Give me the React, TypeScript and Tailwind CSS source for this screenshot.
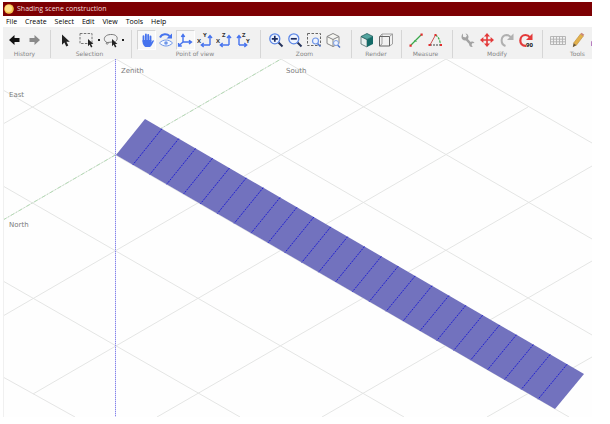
import type { ReactNode } from "react";

const menus = ["File", "Create", "Select", "Edit", "View", "Tools", "Help"];

const BLUE = "#4673ee";

function Icon({ children }: { children: ReactNode }) {
  return (
    <svg viewBox="0 0 16 16" className="h-4 w-4 shrink-0" fill="none" aria-hidden="true">
      {children}
    </svg>
  );
}

const Cursor = ({ x = 0, y = 0, s = 1 }: { x?: number; y?: number; s?: number }) => (
  <path transform={`translate(${x} ${y}) scale(${s})`} d="M0 0v10.2l2.4-2.2 1.9 4 2-1-1.9-3.8h3.4z" fill="#222" />
);

const Arrow = ({ color }: { color: string }) => (
  <path d="M3 8l5.500-5v3h5v4h-5v3z" fill={color} />
);

const Glass = ({ plus }: { plus?: boolean }) => (
  <Icon>
    <path d="M10.5 10.5l4 4" stroke="#26345c" strokeWidth="2" />
    <circle cx="6.8" cy="6.8" r="5" fill="#eef4ff" stroke="#5b86e6" strokeWidth="1.3" />
    <path d={plus ? "M3.8 6.8h6M6.8 3.8v6" : "M3.8 6.8h6"} stroke="#1c2c60" strokeWidth="1.7" />
  </Icon>
);

function Axes({ horizontal, vertical, flip }: { horizontal: string; vertical: string; flip?: boolean }) {
  return (
    <Icon>
      <path
        d={flip ? "M4 13V4M2 6l2-2.400L6 6M4 13h7M9.300 11l2.400 2-2.400 2" : "M13 13V4M11 6l2-2.400L15 6M13 13H5M6.700 11l-2.400 2 2.400 2"}
        stroke={BLUE}
        strokeWidth="1.4"
      />
      <text x={flip ? 11 : 0} y={flip ? 11 : 11} fontSize="6" fontWeight="700" fill="#333">{horizontal}</text>
      <text x={flip ? 7 : 6} y="5" fontSize="6" fontWeight="700" fill="#333">{vertical}</text>
    </Icon>
  );
}

type Tool = { name: string; icon: ReactNode; active?: boolean; drop?: boolean };
type Group = { label: string; width: string; tools: Tool[] };

const groups: Group[] = [
  {
    label: "History",
    width: "w-[48px] pl-[1px] pr-[5px]",
    tools: [
      { name: "Undo", icon: <Icon><Arrow color="#111" /></Icon> },
      { name: "Redo", icon: <Icon><g transform="translate(16 0) scale(-1 1)"><Arrow color="#8a8a8a" /></g></Icon> },
    ],
  },
  {
    label: "Selection",
    width: "w-[81px] pl-[2px] pr-[5px]",
    tools: [
      { name: "Select", icon: <Icon><Cursor x={5} y={2.5} /></Icon> },
      {
        name: "Rectangle selection",
        drop: true,
        icon: (
          <Icon>
            <rect x="1" y="1.5" width="12" height="10" stroke="#777" strokeDasharray="2.5 1.3" />
            <Cursor x={9} y={7} s={0.7} />
          </Icon>
        ),
      },
      {
        name: "Lasso selection",
        drop: true,
        icon: (
          <Icon>
            <path d="M4 10.5C0 9 0 3 7.500 2.500s8 5 5 7M4 10.500c-1 0-1 2 .3 1.700s1-2 0-1.700L9 10" stroke="#777" />
            <Cursor x={9} y={7} s={0.7} />
          </Icon>
        ),
      },
    ],
  },
  {
    label: "Point of view",
    width: "w-[129px] pl-[5px] pr-[7px]",
    tools: [
      {
        name: "Pan",
        active: true,
        icon: (
          <Icon>
            <path d="M4.500 9.500V4.200M6.900 8V2.500M9.200 8V2.800M11.500 9V4.500" stroke={BLUE} strokeWidth="1.800" strokeLinecap="round" />
            <path d="M3.600 8h8.800v2.500l1-1.800c.7-1 1.800-.5 1.400.6l-2.300 4.200c-.5.900-1.200 1.500-2.200 1.500H7.200c-1 0-1.600-.4-2.200-1.200C4 12.500 3.600 11.500 3.600 10z" fill={BLUE} />
          </Icon>
        ),
      },
      {
        name: "Orbit",
        icon: (
          <Icon>
            <path d="M2 5.500C4 1.500 9 1.500 11.500 4" stroke={BLUE} strokeWidth="2" />
            <path d="M14 1.500v5H8.500z" fill={BLUE} />
            <path d="M1.500 11c3.500-4 9.500-4 13 0-3.500 4-9.500 4-13 0z" fill="#f5f9ff" stroke="#6f96e8" />
            <circle cx="8" cy="11" r="1.800" fill="#6f96e8" />
          </Icon>
        ),
      },
      {
        name: "Perspective",
        active: true,
        icon: (
          <Icon>
            <path d="M6 10V3M6 10h8M6 10l-4 3.500M4.300 4.800L6 2.500l1.700 2.300M12 8.200l2.500 1.900-2.500 1.900M1.600 11v3h3.200" stroke={BLUE} strokeWidth="1.400" />
          </Icon>
        ),
      },
      { name: "Top view", icon: <Axes horizontal="X" vertical="Y" /> },
      { name: "Front view", icon: <Axes horizontal="X" vertical="Z" /> },
      { name: "Side view", icon: <Axes horizontal="Y" vertical="Z" flip /> },
    ],
  },
  {
    label: "Zoom",
    width: "w-[91px] pl-[5px] pr-[8px]",
    tools: [
      { name: "Zoom in", icon: <Glass plus /> },
      { name: "Zoom out", icon: <Glass /> },
      {
        name: "Zoom window",
        icon: (
          <Icon>
            <rect x="1.500" y="1.500" width="13" height="12" stroke="#666" strokeDasharray="2.500 1.500" />
            <path d="M11.500 11.500l3 3" stroke="#4a72c8" strokeWidth="1.600" />
            <circle cx="9.500" cy="9" r="3" fill="#eef4ff" stroke="#6f96e8" strokeWidth="1.200" />
          </Icon>
        ),
      },
      {
        name: "Zoom object",
        icon: (
          <Icon>
            <path d="M2 4.500L8 1.500l6 3v7l-6 3-6-3zM2 4.500l6 3 6-3M8 7.500v7" fill="#f7f7f2" stroke="#858585" />
            <path d="M12.500 13l2.500 2.500" stroke="#4a72c8" strokeWidth="1.400" />
            <circle cx="11" cy="11" r="2.500" fill="#eef4ff" stroke="#7d9fe6" />
          </Icon>
        ),
      },
    ],
  },
  {
    label: "Render",
    width: "w-[50px] pl-[5px] pr-[6px]",
    tools: [
      {
        name: "Shaded",
        icon: (
          <Icon>
            <path d="M2 4.500L8 7.500v7.500l-6-3z" fill="#e9f1f0" stroke="#54706e" strokeWidth=".8" />
            <path d="M2 4.500l6-3 6 3-6 3z" fill="#53a5a0" stroke="#24605e" strokeWidth=".8" />
            <path d="M8 7.500l6-3v7.500l-6 3z" fill="#146b68" />
          </Icon>
        ),
      },
      {
        name: "Wireframe",
        icon: (
          <Icon>
            <path d="M1.500 4.500l2.500-2.500h10.500v10l-3 2M11.500 4.500l3-2.500M4 2v10M1.500 14L4 12" stroke="#999" strokeWidth=".9" />
            <path d="M1.500 4.500h10v9.500h-10z" stroke="#666" />
          </Icon>
        ),
      },
    ],
  },
  {
    label: "Measure",
    width: "w-[51px] pl-[4px] pr-[7px]",
    tools: [
      {
        name: "Distance",
        icon: (
          <Icon>
            <path d="M3 13L13 3" stroke="#39a84a" strokeWidth="1.300" />
            <path d="M6.500 8l2 2" stroke="#39a84a" />
            <path d="M1.500 12.500h2.200v2.200H1.500zM12.500 1.500h2.200v2.200h-2.200z" fill="#e02f2f" />
          </Icon>
        ),
      },
      {
        name: "Angle",
        icon: (
          <Icon>
            <path d="M8.500 3L3 13" stroke="#cc5555" />
            <path d="M3 13h11" stroke="#444" strokeDasharray="2 1" />
            <path d="M8.500 3c3 2 4.500 5 5 10" stroke="#39a84a" strokeWidth="1.200" strokeDasharray="2.500 1" />
            <path d="M7.500 2h2v2h-2zM1.500 12h2.200v2H1.500zM13 12h2v2h-2z" fill="#e02f2f" />
          </Icon>
        ),
      },
    ],
  },
  {
    label: "Modify",
    width: "w-[90px] pl-[5px] pr-[6px]",
    tools: [
      {
        name: "Properties",
        icon: (
          <Icon>
            <path d="M5.800 6.500l5 5.500" stroke="#a3a3a3" strokeWidth="2.600" />
            <path d="M3 1.500v3.200l2.500.8L7 3.800 5.500 1.500c3 .5 4 4 2 6-2.500 2-6 .5-6-2.500 0-1.500.5-2.500 1.500-3.500zM14.500 11l-2.300.3-.7 1.700 1.300 1.800c-2 .5-3.800-.8-3.600-2.900.3-2.300 3.500-3.500 5.300-.9z" fill="#a3a3a3" />
          </Icon>
        ),
      },
      {
        name: "Move",
        icon: (
          <Icon>
            <path d="M8 3v10M3 8h10" stroke="#e33a3a" strokeWidth="1.600" />
            <path d="M8 1l3 3.400H5zM8 15l3-3.400H5zM1 8l3.400-3v6zM15 8l-3.400-3v6z" fill="#e33a3a" />
          </Icon>
        ),
      },
      {
        name: "Rotate",
        icon: (
          <Icon>
            <path d="M6.500 14C1 12 1.500 3.500 7.500 3c2 0 3.500 1 4.500 2.500" stroke="#b0b0b0" strokeWidth="2" />
            <path d="M14.500 1.500v6.500H8z" fill="#b0b0b0" />
          </Icon>
        ),
      },
      {
        name: "Rotate by 90 degrees",
        icon: (
          <Icon>
            <path d="M8 13.800C0 14 1 3 7.500 3c2 0 3.500 1 4.500 2.500" stroke="#e33a3a" strokeWidth="2.200" />
            <path d="M14.500 1.500v6.500H8z" fill="#e33a3a" />
            <text x="8" y="15" fontSize="6" fontWeight="700" fill="#111">90</text>
          </Icon>
        ),
      },
    ],
  },
  {
    label: "Tools",
    width: "w-[72px] pl-[5px] pr-[7px]",
    tools: [
      { name: "Table", icon: <Icon><path d="M.5 4.500h15v8H.5zM.5 7.200h15M.5 9.800h15M3.500 4.500v8M6.500 4.500v8M9.500 4.500v8M12.500 4.500v8" stroke="#b0b0b0" strokeWidth=".9" /></Icon> },
      {
        name: "Draw",
        icon: (
          <Icon>
            <path d="M3.500 11.200L10.500 2l2.800 2.100-7 9.200z" fill="#e3b14b" stroke="#b98a32" strokeWidth=".6" />
            <path d="M10.500 2l1-1.300 2.800 2.100-1 1.300z" fill="#c98478" />
            <path d="M3.500 11.200l2.800 2.100-3.500 1.900z" fill="#6b5530" />
          </Icon>
        ),
      },
      { name: "Erase", icon: <Icon><path d="M2 9.500l4-2.500 8 1v6H2z" fill="#b77cc0" /><path d="M3 8l4-4.500 3 2-4 3z" fill="#d58ba5" /></Icon> },
    ],
  },
];

function ToolGroup({ group }: { group: Group }) {
  return (
    <section
      aria-label={group.label}
      className={`flex shrink-0 flex-col border-r border-[#d6d6d6] ${group.width}`}
    >
      <div className="flex h-5 items-center">
        {group.tools.map((t) => (
          <div key={t.name} className="flex h-5 min-w-0 flex-auto basis-4 items-center justify-center">
            <button
              type="button"
              aria-label={t.name}
              aria-pressed={t.active}
              className={`flex h-5 items-center justify-center ${
                t.active ? "w-[19px] border border-[#d4d4d4] border-r-white border-b-white bg-[#f8f8f8]" : "w-4"
              }`}
            >
              {t.icon}
            </button>
            {t.drop && <span className="ml-[3px] h-0.5 w-0.5 shrink-0 bg-[#222]" />}
          </div>
        ))}
      </div>
      <p className="text-center font-['DejaVu_Sans',sans-serif] text-[6px] leading-2 whitespace-nowrap text-[#858585]">
        {group.label}
      </p>
    </section>
  );
}

const gridLines = [
  [3, 124, 116, 59], [3, 316, 446, 59], [33, 394, 528, 107], [157, 417, 592, 166],
  [322, 417, 592, 261], [487, 417, 592, 357], [446, 59, 592, 143], [281, 59, 592, 239],
  [116, 59, 592, 335], [3, 90, 569, 417], [3, 186, 404, 417], [3, 281, 240, 417], [3, 377, 75, 417],
];

const PANELS = 26;
const dividers = Array.from({ length: PANELS - 1 }, (_, i) => (i + 1) / PANELS);

function Scene() {
  return (
    <main className="relative overflow-hidden border-l border-[#f0f0f0] bg-[#fefefe] font-['DejaVu_Sans',sans-serif] text-[7px] leading-2 text-[#7c7c7c]">
      <svg viewBox="4 59 588 358" className="block w-full" role="img" aria-label="Shading scene">
        <g stroke="#e4e5e4" strokeWidth="1">
          {gridLines.map(([x1, y1, x2, y2]) => (
            <line key={`${x1}-${y1}-${x2}`} x1={x1} y1={y1} x2={x2} y2={y2} />
          ))}
        </g>
        <line x1="3" y1="220" x2="281" y2="59" stroke="#e2e8e2" />
        <line x1="3" y1="220" x2="281" y2="59" stroke="#b4dab4" strokeDasharray="4 2 1 2" />
        <line x1="115.500" y1="59" x2="115.500" y2="417" stroke="#d4d4fa" />
        <line x1="115.500" y1="59" x2="115.500" y2="417" stroke="#8484e8" strokeDasharray="1 1" />
        <path d="M116 155L145 119L584 374L555 409Z" fill="#7272be" />
        <g stroke="#2020d2" strokeWidth="1" strokeDasharray="2 1">
          {dividers.map((t) => (
            <line key={t} x1={145 + 439 * t} y1={119 + 255 * t} x2={116 + 439 * t} y2={155 + 254 * t} />
          ))}
        </g>
      </svg>
      <span className="absolute top-2 left-[117px]">Zenith</span>
      <span className="absolute top-2 left-[282px]">South</span>
      <span className="absolute top-8 left-[5px]">East</span>
      <span className="absolute top-[162px] left-[5px]">North</span>
    </main>
  );
}

export default function App() {
  return (
    <div className="bg-white pt-0.5 pr-[18px] pb-[7px] pl-[3px] font-['Open_Sans','Noto_Sans',sans-serif]">
      <header className="flex h-[14px] items-center gap-[3px] bg-[#7d0003] pl-px">
        <svg viewBox="0 0 10 10" className="h-[10px] w-[10px]" aria-hidden="true">
          <circle cx="5" cy="5" r="4.800" fill="#f5c34f" />
          <circle cx="4.500" cy="4.500" r="3.500" fill="#ffe08a" />
        </svg>
        <h1 className="text-[7px] leading-[14px] text-[#f0dada]">Shading scene construction</h1>
      </header>
      <nav aria-label="Main menu" className="flex h-[11px] items-center gap-2 bg-white pl-[3px]">
        {menus.map((m) => (
          <button key={m} type="button" className="text-[7px] leading-[11px] text-black">
            {m}
          </button>
        ))}
      </nav>
      <div role="toolbar" aria-label="Scene tools" className="flex h-8 overflow-hidden bg-[#f1f1f1] pt-[3px] pb-px">
        {groups.map((g) => (
          <ToolGroup key={g.label} group={g} />
        ))}
      </div>
      <Scene />
    </div>
  );
}
